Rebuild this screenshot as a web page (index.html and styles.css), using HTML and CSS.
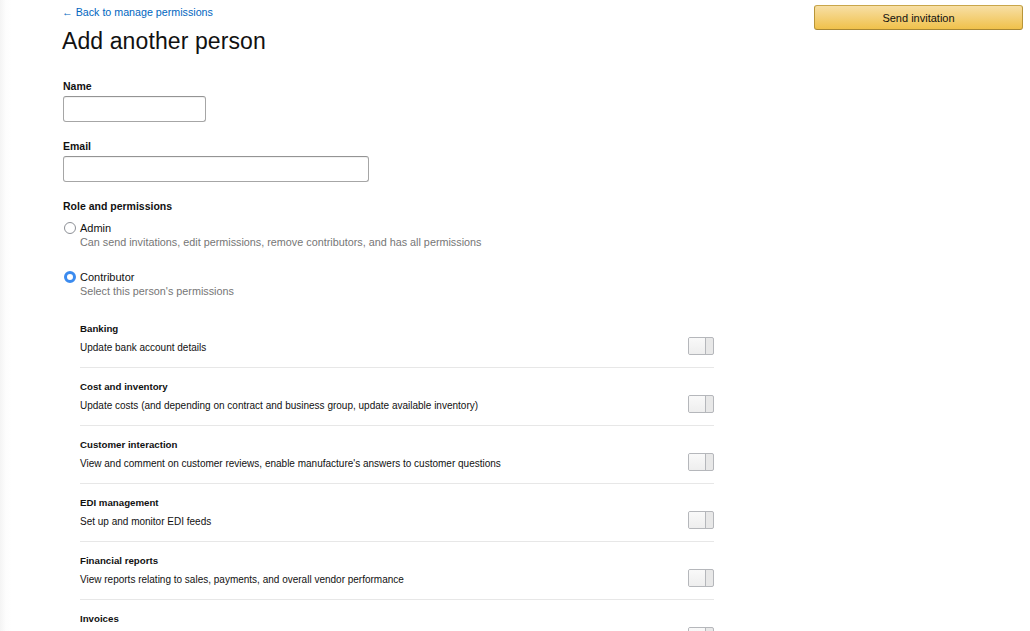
FILE: index.html
```html
<!DOCTYPE html>
<html lang="en">
<head>
<meta charset="UTF-8">
<title>Add another person</title>
<link rel="stylesheet" href="styles.css">
</head>
<body>

<div class="page">
  <div class="main">
    <a class="back" href="#">&larr; Back to manage permissions</a>
    <h1>Add another person</h1>

    <div class="field">
      <label class="lbl">Name</label>
      <input class="inp inp-name" type="text">
    </div>

    <div class="field">
      <label class="lbl">Email</label>
      <input class="inp inp-email" type="text">
    </div>

    <div class="lbl role-lbl">Role and permissions</div>

    <div class="opt">
      <span class="radio"></span>
      <div>
        <div class="opt-name">Admin</div>
        <div class="opt-desc">Can send invitations, edit permissions, remove contributors, and has all permissions</div>
      </div>
    </div>

    <div class="opt">
      <span class="radio on"></span>
      <div>
        <div class="opt-name">Contributor</div>
        <div class="opt-desc">Select this person's permissions</div>
      </div>
    </div>

    <div class="perms">
      <div class="perm">
        <div>
          <div class="perm-title">Banking</div>
          <div class="perm-desc">Update bank account details</div>
        </div>
        <span class="toggle"><span class="knob"></span></span>
      </div>
      <div class="perm">
        <div>
          <div class="perm-title">Cost and inventory</div>
          <div class="perm-desc">Update costs (and depending on contract and business group, update available inventory)</div>
        </div>
        <span class="toggle"><span class="knob"></span></span>
      </div>
      <div class="perm">
        <div>
          <div class="perm-title">Customer interaction</div>
          <div class="perm-desc">View and comment on customer reviews, enable manufacture's answers to customer questions</div>
        </div>
        <span class="toggle"><span class="knob"></span></span>
      </div>
      <div class="perm">
        <div>
          <div class="perm-title">EDI management</div>
          <div class="perm-desc">Set up and monitor EDI feeds</div>
        </div>
        <span class="toggle"><span class="knob"></span></span>
      </div>
      <div class="perm">
        <div>
          <div class="perm-title">Financial reports</div>
          <div class="perm-desc">View reports relating to sales, payments, and overall vendor performance</div>
        </div>
        <span class="toggle"><span class="knob"></span></span>
      </div>
      <div class="perm">
        <div>
          <div class="perm-title">Invoices</div>
          <div class="perm-desc">Create and view invoices</div>
        </div>
        <span class="toggle"><span class="knob"></span></span>
      </div>
    </div>
  </div>

  <div class="side">
    <button class="send">Send invitation</button>
  </div>
</div>

</body>
</html>
```

FILE: styles.css
```css
body {
  margin: 0;
  font-family: "Liberation Sans", Arial, sans-serif;
  color: #111;
  background: linear-gradient(to right, #f4f4f4 0, #fdfdfd 6px, #fff 12px);
  height: 631px;
  overflow: hidden;
}
.page {
  display: flex;
  justify-content: space-between;
}
.main {
  padding: 5px 0 0 62px;
  width: 652px;
}
.back {
  display: block;
  font-size: 10.7px;
  line-height: 14px;
  color: #0066c0;
  text-decoration: none;
}
h1 {
  margin: 9px 0 0;
  font-size: 23px;
  font-weight: normal;
  line-height: 26px;
  letter-spacing: 0.1px;
}
.field {
  display: flex;
  flex-direction: column;
  align-items: flex-start;
  margin-top: 25px;
}
.field + .field {
  margin-top: 17px;
}
.lbl {
  font-size: 10.5px;
  font-weight: bold;
  line-height: 14px;
  padding-left: 1px;
  margin-bottom: 3px;
}
.inp {
  box-sizing: border-box;
  height: 26px;
  border: 1px solid #a6a6a6;
  border-top-color: #949494;
  border-radius: 3px;
  box-shadow: inset 0 1px 0 rgba(0,0,0,.05);
  margin: 0 0 0 1px;
}
.inp-name { width: 143px; }
.inp-email { width: 306px; }
.role-lbl {
  margin-top: 17px;
  margin-bottom: 0;
}
.opt {
  display: flex;
  align-items: flex-start;
  margin-top: 8px;
}
.opt + .opt {
  margin-top: 20px;
}
.radio {
  box-sizing: border-box;
  width: 12px;
  height: 12px;
  border: 1px solid #8d9096;
  border-radius: 50%;
  margin: 1px 4px 0 2px;
  background: #fff;
}
.radio.on {
  border: 3.5px solid #3b8bef;
}
.opt-name {
  font-size: 11px;
  line-height: 14px;
}
.opt-desc {
  font-size: 10.8px;
  line-height: 15px;
  color: #767676;
}
.perms {
  margin: 11px 0 0 18px;
}
.perm {
  display: flex;
  justify-content: space-between;
  align-items: flex-end;
  padding: 12px 0 12px;
  border-bottom: 1px solid #e7e7e7;
}
.perm-title {
  font-size: 9.7px;
  font-weight: bold;
  line-height: 14px;
}
.perm-desc {
  font-size: 10px;
  line-height: 14px;
  margin-top: 5px;
}
.toggle {
  display: block;
  box-sizing: border-box;
  width: 26px;
  height: 18px;
  border: 1px solid #b5b7bb;
  border-radius: 2px;
  background: #e8e8e8;
  margin-bottom: 0;
  overflow: hidden;
}
.knob {
  display: block;
  width: 16px;
  height: 100%;
  background: linear-gradient(#f9f9f9, #eeeeee);
  border-right: 1px solid #b5b7bb;
}
.side {
  padding: 5px 7px 0 0;
}
.send {
  width: 209px;
  height: 25px;
  font-family: "Liberation Sans", Arial, sans-serif;
  font-size: 11px;
  color: #111;
  background: linear-gradient(#f7dfa5, #f0c14b);
  border: 1px solid #a88734;
  border-color: #c9a64a #b89538 #a88734;
  border-radius: 3px;
  cursor: pointer;
}
```
